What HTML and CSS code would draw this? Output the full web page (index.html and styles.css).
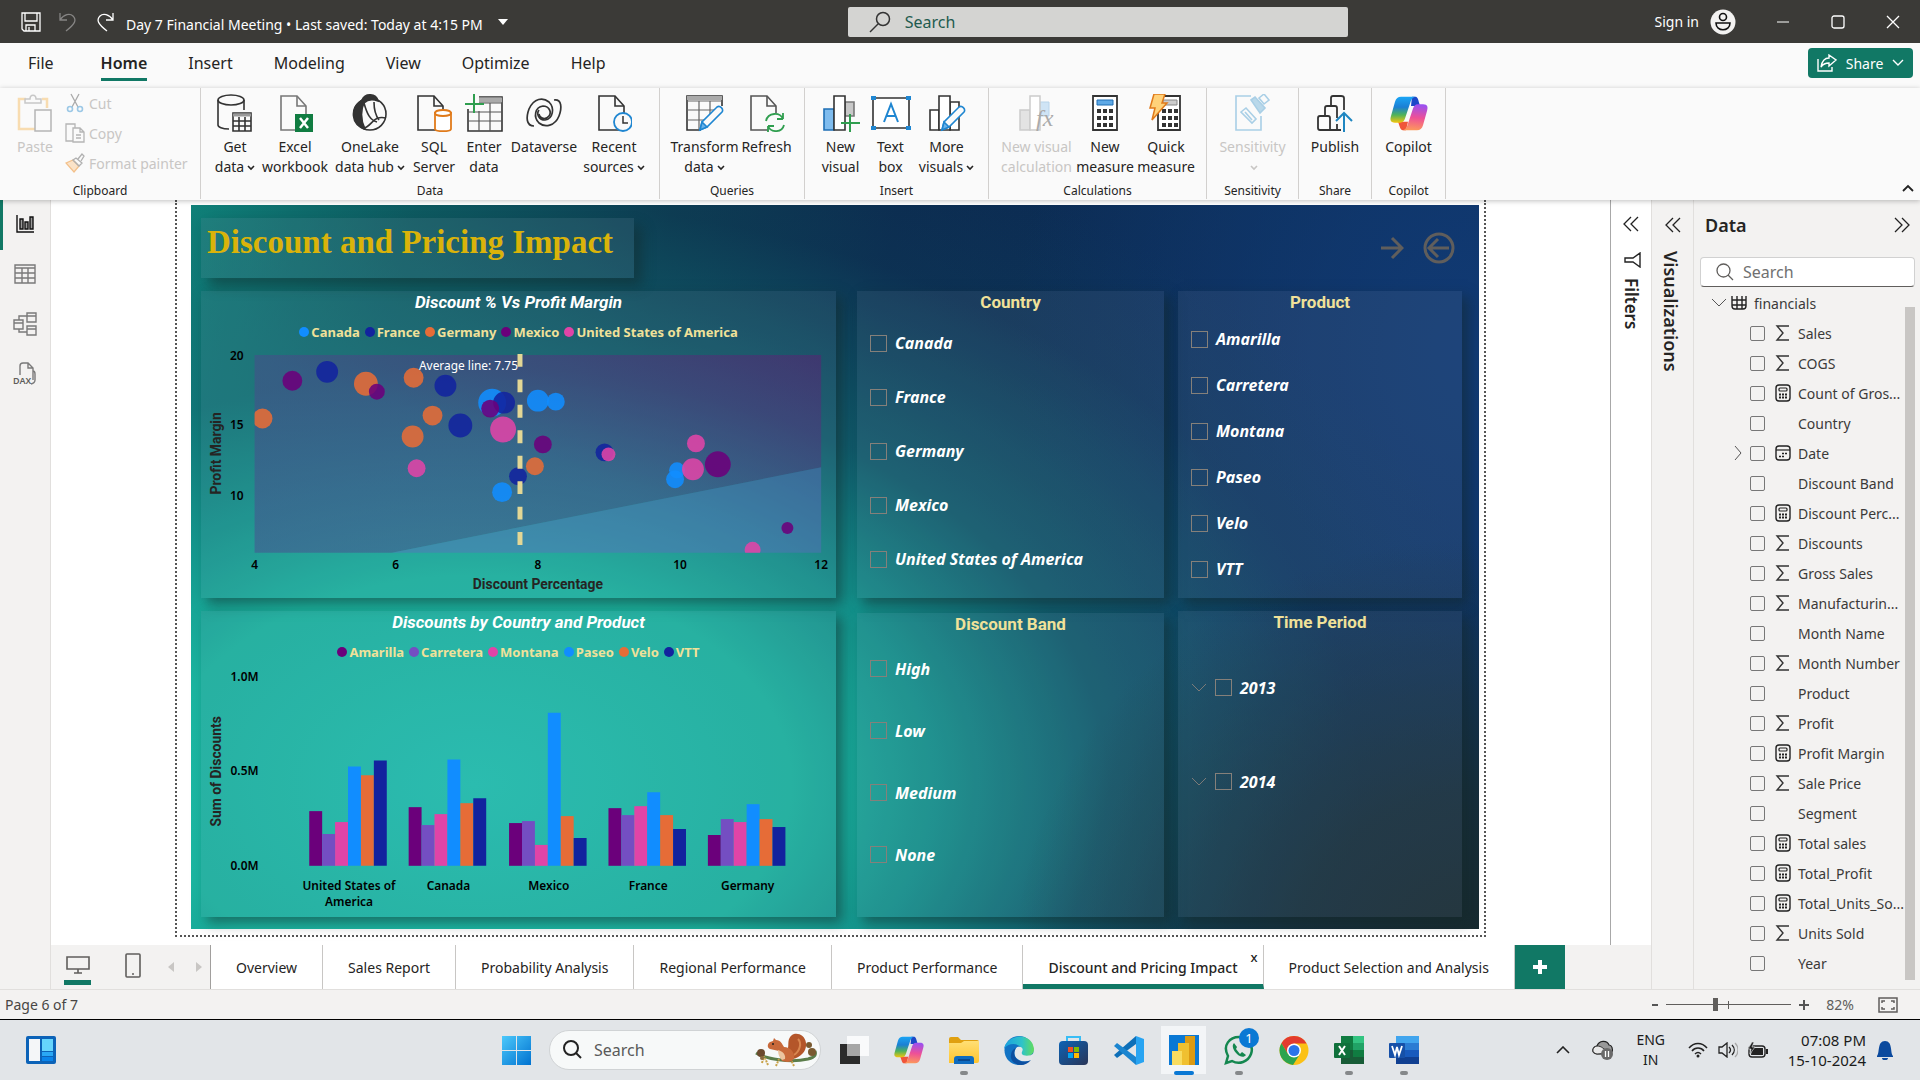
FILE: index.html
```html
<!DOCTYPE html>
<html lang="en">
<head>
<meta charset="utf-8">
<title>Day 7 Financial Meeting</title>
<link rel="stylesheet" href="styles.css">
</head>
<body>
<svg class="defs" aria-hidden="true">
  <defs>
    <linearGradient id="cpA" x1="0" y1="0" x2="0" y2="1"><stop offset="0" stop-color="#1aa5f5"/><stop offset=".4" stop-color="#1b7fd4"/><stop offset=".7" stop-color="#4fb35a"/><stop offset="1" stop-color="#f3c60d"/></linearGradient>
    <linearGradient id="cpB" x1=".4" y1="0" x2=".3" y2="1"><stop offset="0" stop-color="#9b50f0"/><stop offset=".5" stop-color="#ee5097"/><stop offset="1" stop-color="#fd9a5a"/></linearGradient>
    <linearGradient id="winG" x1="0" y1="0" x2="1" y2="1"><stop offset="0" stop-color="#4cc9fb"/><stop offset="1" stop-color="#0072d0"/></linearGradient>
    <linearGradient id="edgeG" x1="0" y1="0" x2="1" y2="0"><stop offset="0" stop-color="#1aa0e0"/><stop offset=".6" stop-color="#2fc3c9"/><stop offset="1" stop-color="#62dd5c"/></linearGradient>
    <linearGradient id="folderG" x1="0" y1="0" x2="0" y2="1"><stop offset="0" stop-color="#ffdf75"/><stop offset="1" stop-color="#ffc42e"/></linearGradient>
    <linearGradient id="storeG" x1="0" y1="0" x2="1" y2="1"><stop offset="0" stop-color="#0c63b5"/><stop offset="1" stop-color="#2a3557"/></linearGradient>
    <linearGradient id="shadeG" x1="0" y1="1" x2="1" y2="0"><stop offset="0" stop-color="#4a4c90"/><stop offset=".5" stop-color="#4a4a8c"/><stop offset="1" stop-color="#5c1f74"/></linearGradient>
    <symbol id="copilot" viewBox="0 0 38 42">
      <path d="M22 1h3c3 0 3 3 5 11h-9z" fill="#1c48c8"/>
      <path d="M16 41h-3c-3 0-3-4-5-10h10z" fill="#f0553a"/>
      <path d="M11 1h14c-3 1-4 4-5 8l-5 18c-1 3-2 5-5 5H5c-5 0-5-4-4-8L5 7c1-4 3-6 6-6z" fill="url(#cpA)"/>
      <path d="M27 41H13c3-1 4-4 5-8l5-18c1-3 2-5 5-5h5c5 0 5 4 4 8l-4 17c-1 4-3 6-6 6z" fill="url(#cpB)"/>
    </symbol>
    <symbol id="sigma" viewBox="0 0 16 16"><path d="M14 1H2l6 7-6 7h12" fill="none" stroke="#333" stroke-width="1.4"/></symbol>
    <symbol id="calc" viewBox="0 0 16 18"><rect x="1" y="1" width="14" height="16" rx="3" fill="none" stroke="#222" stroke-width="1.4"/><rect x="4" y="4" width="8" height="3" rx="1" fill="none" stroke="#222" stroke-width="1.2"/><path d="M4 10.500h2m1 0h2m1 0h2M4 13.500h2m1 0h2m1 0h2" stroke="#222" stroke-width="2"/></symbol>
    <symbol id="cal" viewBox="0 0 16 16"><rect x="1" y="1" width="14" height="14" rx="3" fill="none" stroke="#222" stroke-width="1.400"/><path d="M1 5h14" stroke="#222" stroke-width="1.200"/><path d="M7 8.500h2m1 0h2M4 11.500h2m1 0h2" stroke="#222" stroke-width="1.500"/></symbol>
    <symbol id="chev" viewBox="0 0 8 6"><path d="M1 1l3 3 3-3" fill="none" stroke="currentColor" stroke-width="1.600"/></symbol>
    <symbol id="dbl" viewBox="0 0 16 16"><path d="M8 1L1 8l7 7M15 1L8 8l7 7" fill="none" stroke="#222" stroke-width="1.300"/></symbol>
    <symbol id="doc" viewBox="0 0 27 36"><path d="M1 1h16l9 10v24H1z" fill="none" stroke="currentColor" stroke-width="1.600"/><path d="M17 1v10h9" fill="none" stroke="currentColor" stroke-width="1.600"/></symbol>
    <symbol id="pencil" viewBox="0 0 26 27"><path d="M2 25l2-8L19 2c3-2 7 2 5 5L9 22z" fill="#fafafa" stroke="#1f86d1" stroke-width="1.600"/><path d="M2 25l2-8 5 5z" fill="#6ab3ea" stroke="#1f86d1"/></symbol>
  </defs>
</svg>

<header class="titlebar">
  <button class="tb-btn" aria-label="Save"><svg width="20" height="20" viewBox="0 0 20 20" fill="none" stroke="#fff" stroke-width="1.300"><path d="M1 1h18v18H3l-2-2zM4 1v8h12V1M5 19v-6h9v6M8 15v4"/></svg></button>
  <button class="tb-btn" aria-label="Undo"><svg width="20" height="20" viewBox="0 0 20 20" fill="none" stroke="#868584" stroke-width="1.300"><path d="M2 1v7h7M2 8C6 2 12 1 15 4c4 4 2 8-7 15"/></svg></button>
  <button class="tb-btn" aria-label="Redo"><svg width="20" height="20" viewBox="0 0 20 20" fill="none" stroke="#fff" stroke-width="1.300"><path d="M18 1v7h-7M18 8C14 2 8 1 5 4c-4 4-2 8 7 15"/></svg></button>
  <span class="doc-name">Day 7 Financial Meeting • Last saved: Today at 4:15 PM</span>
  <svg class="caret" width="10" height="6" viewBox="0 0 10 6"><path d="M0 0h10L5 6z" fill="#fff"/></svg>
  <label class="top-search"><svg width="22" height="22" viewBox="0 0 22 22" fill="none" stroke="#333" stroke-width="1.500"><circle cx="14" cy="8" r="6.500"/><path d="M9 13l-8 8"/></svg><input type="text" placeholder="Search" aria-label="Search"></label>
  <div class="account"><span>Sign in</span><svg width="26" height="26" viewBox="0 0 26 26"><circle cx="13" cy="13" r="12.500" fill="#f3f2f1"/><g fill="none" stroke="#111" stroke-width="1.600"><circle cx="13" cy="8" r="3.500"/><path d="M6 14h14c0 9-14 9-14 0z"/></g></svg></div>
  <div class="win-btns">
    <button aria-label="Minimize"><svg width="14" height="14"><path d="M1 7h12" stroke="#fff"/></svg></button>
    <button aria-label="Maximize"><svg width="14" height="14"><rect x="1" y="1" width="12" height="12" rx="2" fill="none" stroke="#fff" stroke-width="1.300"/></svg></button>
    <button aria-label="Close"><svg width="14" height="14"><path d="M1 1l12 12M13 1L1 13" stroke="#fff" stroke-width="1.300"/></svg></button>
  </div>
</header>

<nav class="menu">
  <a href="#" class="file">File</a><a href="#" class="on">Home</a><a href="#">Insert</a><a href="#">Modeling</a><a href="#">View</a><a href="#">Optimize</a><a href="#">Help</a>
  <button class="share"><svg width="20" height="18" viewBox="0 0 20 18" fill="none" stroke="#fff" stroke-width="1.400"><path d="M1 5v12h14v-4"/><path d="M12 1l7 5-7 6V9C8 9 6 10 4 13c1-6 4-9 8-9z"/></svg>Share<svg width="12" height="8" viewBox="0 0 12 8"><path d="M1 1l5 5 5-5" fill="none" stroke="#fff" stroke-width="1.400"/></svg></button>
</nav>

<section class="ribbon">
  <div class="group g-clip"><div class="tools">
    <button class="tool off"><svg width="36" height="38" viewBox="0 0 36 38" fill="none"><path d="M9 5H2v30h16M25 5h5v9" stroke="#f8dcb0" stroke-width="2.500"/><path d="M8 9V5h5c0-5 6-5 6 0h5v4z" stroke="#c8c8c8" stroke-width="1.500"/><path d="M18 16h16v21H18z" stroke="#b5b5b5" stroke-width="1.500"/></svg><span>Paste</span></button>
    <div class="mini">
      <button><svg width="20" height="20" viewBox="0 0 20 20" fill="none" stroke="#aaa" stroke-width="1.300"><path d="M6 1l7 13M14 1L7 14"/><g stroke="#9cc8e6" stroke-width="1.600"><circle cx="5" cy="16" r="2.500"/><circle cx="15" cy="16" r="2.500"/></g></svg>Cut</button>
      <button><svg width="20" height="20" viewBox="0 0 20 20" fill="none" stroke="#b5b5b5" stroke-width="1.300"><path d="M8 18H1V1h9v4"/><path d="M8 5h7l4 4v10H8zM15 5v4h4M11 12h5M11 15h5"/></svg>Copy</button>
      <button><svg width="20" height="20" viewBox="0 0 20 20" fill="none" stroke-width="1.300"><path d="M1 10l7-3 6 6-5 6z" fill="#fbe3c8" stroke="#f3c08a"/><path d="M8 7l3-2 6 5-3 3zM13 6l4-5 2 2-3 5" stroke="#b0b0b0"/></svg>Format painter</button>
    </div></div><h2>Clipboard</h2></div>

  <div class="group g-data"><div class="tools">
    <button class="tool"><svg width="36" height="38" viewBox="0 0 36 38" fill="none" stroke="#333" stroke-width="1.600"><ellipse cx="14" cy="6" rx="13" ry="5"/><path d="M1 6v25c0 2 4 4 11 4M27 6v10"/><path d="M16 19h18v18H16zM16 27h18M16 32h18M22 23v14M28 23v14"/><path d="M16 21h18" stroke="#999" stroke-width="3"/></svg><span>Get<br>data<svg class="ch"><use href="#chev"/></svg></span></button>
    <button class="tool"><svg width="36" height="38" viewBox="0 0 36 38"><use href="#doc" x="3" y="1" width="27" height="36" color="#777"/><path d="M18 20h18v18H18z" fill="#107c41"/><path d="M23 24l8 10M31 24l-8 10" stroke="#fff" stroke-width="2.500"/></svg><span>Excel<br>workbook</span></button>
    <button class="tool"><svg width="36" height="38" viewBox="0 0 36 38" fill="none" stroke="#333" stroke-width="1.600"><circle cx="18" cy="20" r="16"/><path d="M10 6c3-7 14-7 16 1-5-2-10-2-14 2-3 6-4 16 1 26C-2 30-1 14 8 8z" fill="#333"/><path d="M12 9c3 11 6 17 13 19M22 8c0 8 2 14 5 18M12 34c8-2 9-13 22-10"/></svg><span>OneLake<br>data hub<svg class="ch"><use href="#chev"/></svg></span></button>
    <button class="tool"><svg width="36" height="38" viewBox="0 0 36 38"><use href="#doc" x="1" y="1" width="27" height="36" color="#333"/><path d="M19 19v16c0 3 16 3 16 0V19z" fill="#fff" stroke="#e07a1a" stroke-width="1.800"/><ellipse cx="27" cy="19" rx="8" ry="3" fill="#fff" stroke="#e07a1a" stroke-width="1.800"/></svg><span>SQL<br>Server</span></button>
    <button class="tool"><svg width="38" height="38" viewBox="0 0 38 38" fill="none" stroke="#333" stroke-width="1.600"><path d="M14 3h23v34H3V15"/><path d="M14 6h23" stroke="#aaa" stroke-width="5"/><path d="M14 9h23M3 18h34M3 27h34M14 17v20M25 9v28" stroke="#555" stroke-width="1.200"/><path d="M9 0v19M0 10h19" stroke="#2f9e4f" stroke-width="2"/></svg><span>Enter<br>data</span></button>
    <button class="tool"><svg width="38" height="38" viewBox="0 0 38 38" fill="none" stroke="#333" stroke-width="1.700"><path d="M29 6c8-1 8 8 5 16-4 10-14 12-20 7-6-6-4-16 4-17 6 0 9 6 6 10-3 4-9 3-10-2"/><path d="M9 32c-8 0-8-9-5-17C9 4 18 3 24 8c6 6 4 17-4 18-6 0-9-6-6-10"/></svg><span>Dataverse</span></button>
    <button class="tool"><svg width="36" height="38" viewBox="0 0 36 38"><use href="#doc" x="2" y="1" width="27" height="36" color="#333"/><circle cx="27" cy="28" r="9" fill="#fafafa" stroke="#1f86d1" stroke-width="1.800"/><path d="M27 22v7h5" fill="none" stroke="#333" stroke-width="1.500"/></svg><span>Recent<br>sources<svg class="ch"><use href="#chev"/></svg></span></button>
  </div><h2>Data</h2></div>

  <div class="group g-quer"><div class="tools">
    <button class="tool"><svg width="38" height="38" viewBox="0 0 38 38" fill="none" stroke="#333" stroke-width="1.600"><path d="M15 36H1V2h35v10"/><path d="M1 4h35" stroke="#aaa" stroke-width="4"/><path d="M1 7h35M1 16h32M1 26h18M13 7v29M24 7v14" stroke="#666" stroke-width="1.200"/><use href="#pencil" x="12" y="11" width="26" height="27"/></svg><span>Transform<br>data<svg class="ch"><use href="#chev"/></svg></span></button>
    <button class="tool"><svg width="36" height="38" viewBox="0 0 36 38" fill="none"><use href="#doc" x="1" y="1" width="27" height="36" color="#555"/><circle cx="26" cy="29" r="10" fill="#fafafa"/><path d="M17 27c2-9 14-9 17-2V19M34 25h-6M35 31c-2 8-13 8-16 1v6M19 32h6" stroke="#2f9e4f" stroke-width="1.800"/></svg><span>Refresh</span></button>
  </div><h2>Queries</h2></div>

  <div class="group g-ins"><div class="tools">
    <button class="tool"><svg width="38" height="38" viewBox="0 0 38 38" stroke="#333" stroke-width="1.600"><path d="M23 8h9v14h-9z" fill="#c8c8c8" stroke="#777"/><path d="M2 15h10v21H2z" fill="#7fbcee" stroke="#1f6fb5"/><path d="M12 2h11v34H12z" fill="#fff"/><path d="M28 20v19M19 29h19" stroke="#2f9e4f" stroke-width="2"/></svg><span>New<br>visual</span></button>
    <button class="tool"><svg width="40" height="38" viewBox="0 0 40 38"><path d="M2 4h36v30H2z" fill="#fff" stroke="#333" stroke-width="1.600"/><path d="M0 2h5v4H0zM35 2h5v4h-5zM0 32h5v4H0zM35 32h5v4h-5z" fill="#1f86d1"/><path d="M13 28l7-18 7 18M15 22h10" fill="none" stroke="#1f86d1" stroke-width="2"/></svg><span>Text<br>box</span></button>
    <button class="tool"><svg width="38" height="38" viewBox="0 0 38 38" fill="#fff" stroke="#333" stroke-width="1.600"><path d="M22 8h9v28h-9z"/><path d="M2 16h9v20H2z"/><path d="M11 2h11v34H11z"/><use href="#pencil" x="12" y="11" width="26" height="27"/></svg><span>More<br>visuals<svg class="ch"><use href="#chev"/></svg></span></button>
  </div><h2>Insert</h2></div>

  <div class="group g-calc"><div class="tools">
    <button class="tool off"><svg width="38" height="38" viewBox="0 0 38 38"><path d="M22 8h9v14h-9z" fill="#cfe4f5" stroke="#b8d4ea"/><path d="M2 16h10v20H2z" fill="#e3e3e3" stroke="#ccc" stroke-width="1.500"/><path d="M12 2h10v34H12z" fill="#fff" stroke="#ccc" stroke-width="1.500"/><text x="18" y="32" class="fx">fx</text></svg><span>New visual<br>calculation</span></button>
    <button class="tool"><svg width="26" height="38" viewBox="0 0 26 38"><path d="M1 2h24v34H1z" fill="#fff" stroke="#333" stroke-width="1.800"/><path d="M5 6h16v5H5z" fill="#5ea9e6" stroke="#1f6fb5"/><path d="M5 17h16M5 24h16M5 31h16" stroke="#333" stroke-width="4" stroke-dasharray="4 2"/></svg><span>New<br>measure</span></button>
    <button class="tool"><svg width="34" height="38" viewBox="0 0 34 38"><path d="M9 2h22v34H9z" fill="#fff" stroke="#333" stroke-width="1.800"/><path d="M14 6h14v5H14z" fill="#ccc" stroke="#888"/><path d="M13 17h16M13 24h16M13 31h16" stroke="#333" stroke-width="4" stroke-dasharray="4 2"/><path d="M5 0h11l-3 9h5L3 26l3-12H1z" fill="#ffd27a" stroke="#e07a1a" stroke-width="1.500"/></svg><span>Quick<br>measure</span></button>
  </div><h2>Calculations</h2></div>

  <div class="group g-sens"><div class="tools">
    <button class="tool off"><svg width="36" height="38" viewBox="0 0 36 38" fill="none" stroke="#a9cfe6" stroke-width="1.600"><path d="M17 2H2v34h25V22"/><path d="M25 4l5-4 5 6-5 4zM7 18l5-4 10 11-4 4z"/><path d="M11 18l7 8"/><path d="M17 6l4-3 10 11-5 5z" fill="#b9d8ea"/></svg><span>Sensitivity<br><svg class="ch"><use href="#chev"/></svg></span></button>
  </div><h2>Sensitivity</h2></div>
  <div class="group g-share"><div class="tools">
    <button class="tool"><svg width="36" height="38" viewBox="0 0 36 38" fill="none" stroke="#333" stroke-width="1.800"><path d="M1 24q0-2 2-2h8q2 0 2 2v12H3q-2 0-2-2zM8 22v-8q0-2 2-2h8q2 0 2 2v10M14 12V4q0-2 2-2h8q3 0 3 2v12M13 36h11M20 30v6"/><path d="M27 38V19M19 27l8-8 8 8" stroke="#1f86c1" stroke-width="2"/></svg><span>Publish</span></button>
  </div><h2>Share</h2></div>
  <div class="group g-cop"><div class="tools">
    <button class="tool"><svg width="40" height="38"><svg y="2" x="1" width="38" height="35" viewBox="0 0 38 42" preserveAspectRatio="none"><use href="#copilot" width="38" height="42"/></svg></svg><span>Copilot</span></button>
  </div><h2>Copilot</h2></div>
  <button class="collapse" aria-label="Collapse ribbon"><svg width="12" height="8"><path d="M1 7l5-5 5 5" fill="none" stroke="#222" stroke-width="1.800"/></svg></button>
</section>

<main class="work">
  <nav class="rail">
    <button class="on" aria-label="Report view"><svg width="20" height="20" viewBox="0 0 20 20" fill="none" stroke="#111" stroke-width="1.400"><path d="M2 1v17h17"/><path d="M5 5h3v10H5zM10 8h3v7h-3zM15 3h3v12h-3z" fill="#999"/></svg></button>
    <button aria-label="Table view"><svg width="22" height="20" viewBox="0 0 22 20" fill="none" stroke="#7a7a7a" stroke-width="1.400"><path d="M1 1h20v18H1zM1 4h20M1 9h20M1 14h20M8 4v15M14 4v15"/></svg></button>
    <button aria-label="Model view"><svg width="24" height="24" viewBox="0 0 24 24" fill="none" stroke="#7a7a7a" stroke-width="1.400"><path d="M1 8h9v9H1zM1 11h9M14 1h9v9h-9zM14 4h9M14 14h9v9h-9zM14 17h9M6 8V4h8M6 17v3h8"/></svg></button>
    <button aria-label="DAX query view"><svg width="24" height="24" viewBox="0 0 24 24" fill="none" stroke="#7a7a7a" stroke-width="1.400"><path d="M7 13V4q0-3 3-3h5l5 5v12M15 1v5h5M20 9q2 0 2 3v6q0 3-4 4"/><text x="0" y="22" class="dax">DAX</text></svg></button>
  </nav>

  <div class="center">
    <div class="stage">
      <div class="canvas"><div class="frame"><div class="report">
        <div class="head">
          <h1>Discount and Pricing Impact</h1>
          <div class="arrows">
            <button aria-label="Next"><svg width="24" height="24" viewBox="0 0 24 24" fill="none" stroke="#605e5c" stroke-width="3"><path d="M1 12h20M12 2l10 10-10 10"/></svg></button>
            <button aria-label="Back"><svg width="32" height="32" viewBox="0 0 32 32" fill="none" stroke="#605e5c" stroke-width="3"><circle cx="16" cy="16" r="14"/><path d="M26 16H7M15 7l-9 9 9 9"/></svg></button>
          </div>
        </div>
        <section class="card">
          <h3 class="it">Discount % Vs Profit Margin</h3>
          <ul class="legend"><li><i class="blue"></i>Canada</li><li><i class="navy"></i>France</li><li><i class="orange"></i>Germany</li><li><i class="plum"></i>Mexico</li><li><i class="pink"></i>United States of America</li></ul>
          <svg class="chart" viewBox="0 0 635 254">
            <clipPath id="plot"><rect x="52" y="10" width="570" height="199"/></clipPath>
            <path d="M52 10h570v113L190 209H52z" fill="url(#shadeG)" fill-opacity=".52"/>
            <path d="M622 123v86H190z" fill="#6269c3" fill-opacity=".42"/>
            <g clip-path="url(#plot)" fill-opacity=".88">
              <circle class="plum" cx="90" cy="36" r="10"/><circle class="navy" cx="125" cy="27" r="11"/><circle class="orange" cx="164" cy="39" r="12"/><circle class="plum" cx="175" cy="47" r="8"/><circle class="orange" cx="212" cy="33" r="10"/><circle class="navy" cx="244" cy="41" r="11"/><circle class="orange" cx="60" cy="74" r="10"/><circle class="orange" cx="231" cy="71" r="10"/><circle class="orange" cx="211" cy="92" r="11"/><circle class="navy" cx="259" cy="81" r="12"/><circle class="blue" cx="291" cy="58" r="14"/><circle class="navy" cx="303" cy="58" r="11"/><circle class="plum" cx="289" cy="64" r="9"/><circle class="pink" cx="302" cy="85" r="13"/><circle class="blue" cx="337" cy="56" r="11"/><circle class="blue" cx="355" cy="57" r="9"/><circle class="plum" cx="342" cy="100" r="9"/><circle class="orange" cx="334" cy="122" r="9"/><circle class="navy" cx="317" cy="132" r="9"/><circle class="blue" cx="301" cy="148" r="10"/><circle class="pink" cx="215" cy="124" r="9"/><circle class="navy" cx="404" cy="108" r="9"/><circle class="pink" cx="408" cy="110" r="7"/><circle class="pink" cx="496" cy="99" r="9"/><circle class="blue" cx="477" cy="126" r="8"/><circle class="blue" cx="475" cy="135" r="9"/><circle class="pink" cx="493" cy="125" r="11"/><circle class="plum" cx="518" cy="120" r="13"/><circle class="plum" cx="588" cy="184" r="6"/><circle class="pink" cx="553" cy="206" r="8"/>
            </g>
            <path d="M319 9v194" stroke="#e3d795" stroke-width="5" stroke-dasharray="13 12.600"/>
            <text class="avg" x="317" y="25">Average line: 7.75</text>
            <g class="ytick"><text x="41" y="15">20</text><text x="41" y="85">15</text><text x="41" y="156">10</text></g>
            <g class="xtick"><text x="52" y="225">4</text><text x="194" y="225">6</text><text x="337" y="225">8</text><text x="480" y="225">10</text><text x="622" y="225">12</text></g>
            <text class="axis" x="337" y="245">Discount Percentage</text>
            <text class="axis" transform="rotate(-90 18 109)" x="18" y="109">Profit Margin</text>
          </svg>
        </section>
        <fieldset class="card slicer country"><legend>Country</legend>
          <label><input type="checkbox">Canada</label><label><input type="checkbox">France</label><label><input type="checkbox">Germany</label><label><input type="checkbox">Mexico</label><label><input type="checkbox">United States of America</label>
        </fieldset>
        <fieldset class="card slicer product"><legend>Product</legend>
          <label><input type="checkbox">Amarilla</label><label><input type="checkbox">Carretera</label><label><input type="checkbox">Montana</label><label><input type="checkbox">Paseo</label><label><input type="checkbox">Velo</label><label><input type="checkbox">VTT</label>
        </fieldset>
        <section class="card">
          <h3 class="it">Discounts by Country and Product</h3>
          <ul class="legend"><li><i class="plum"></i>Amarilla</li><li><i class="violet"></i>Carretera</li><li><i class="pink"></i>Montana</li><li><i class="blue"></i>Paseo</li><li><i class="orange"></i>Velo</li><li><i class="navy"></i>VTT</li></ul>
          <svg class="chart" viewBox="0 0 635 254">
            <g class="ytick"><text x="56" y="16">1.0M</text><text x="56" y="111">0.5M</text><text x="56" y="206">0.0M</text></g>
            <g><path class="plum" d="M107 202v-55h13v55z"/><path class="violet" d="M120 202v-32h13v32z"/><path class="pink" d="M133 202v-44h13v44z"/><path class="blue" d="M146 202v-100h13v100z"/><path class="orange" d="M159 202v-91h13v91z"/><path class="navy" d="M172 202v-106h13v106z"/></g>
            <g><path class="plum" d="M207 202v-59h13v59z"/><path class="violet" d="M220 202v-41h13v41z"/><path class="pink" d="M233 202v-52h13v52z"/><path class="blue" d="M246 202v-107h13v107z"/><path class="orange" d="M259 202v-63h13v63z"/><path class="navy" d="M272 202v-68h13v68z"/></g>
            <g><path class="plum" d="M308 202v-43h13v43z"/><path class="violet" d="M321 202v-45h13v45z"/><path class="pink" d="M334 202v-21h13v21z"/><path class="blue" d="M347 202v-154h13v154z"/><path class="orange" d="M360 202v-50h13v50z"/><path class="navy" d="M373 202v-28h13v28z"/></g>
            <g><path class="plum" d="M408 202v-58h13v58z"/><path class="violet" d="M421 202v-51h13v51z"/><path class="pink" d="M434 202v-60h13v60z"/><path class="blue" d="M447 202v-74h13v74z"/><path class="orange" d="M460 202v-51h13v51z"/><path class="navy" d="M473 202v-37h13v37z"/></g>
            <g><path class="plum" d="M508 202v-31h13v31z"/><path class="violet" d="M521 202v-47h13v47z"/><path class="pink" d="M534 202v-44h13v44z"/><path class="blue" d="M547 202v-62h13v62z"/><path class="orange" d="M560 202v-47h13v47z"/><path class="navy" d="M573 202v-39h13v39z"/></g>
            <g class="xtick"><text x="147" y="226">United States of</text><text x="147" y="242">America</text><text x="247" y="226">Canada</text><text x="348" y="226">Mexico</text><text x="448" y="226">France</text><text x="548" y="226">Germany</text></g>
            <text class="axis" transform="rotate(-90 18 107)" x="18" y="107">Sum of Discounts</text>
          </svg>
        </section>
        <fieldset class="card slicer band"><legend>Discount Band</legend>
          <label><input type="checkbox">High</label><label><input type="checkbox">Low</label><label><input type="checkbox">Medium</label><label><input type="checkbox">None</label>
        </fieldset>
        <fieldset class="card slicer time"><legend>Time Period</legend>
          <label><svg width="16" height="9" viewBox="0 0 16 9"><path d="M1 1l7 7 7-7" fill="none" stroke="#7c7a78"/></svg><input type="checkbox">2013</label><label><svg width="16" height="9" viewBox="0 0 16 9"><path d="M1 1l7 7 7-7" fill="none" stroke="#7c7a78"/></svg><input type="checkbox">2014</label>
        </fieldset>
      </div></div></div>
      <aside class="filters"><svg class="dbl" width="20" height="16"><use href="#dbl"/></svg><svg width="20" height="16" viewBox="0 0 20 16"><path d="M19 1v14l-7-5H4V6h8z" fill="none" stroke="#222" stroke-width="1.400"/></svg><h2>Filters</h2></aside>
    </div>
    <div class="pages">
      <div class="modes">
        <button class="on" aria-label="Desktop layout"><svg width="24" height="18" viewBox="0 0 24 18" fill="none" stroke="#605e5c" stroke-width="1.600"><path d="M1 1h22v12H1zM12 13v4M8 17h8"/></svg></button>
        <button aria-label="Mobile layout"><svg width="16" height="26" viewBox="0 0 16 26" fill="none" stroke="#605e5c" stroke-width="1.600"><rect x="1" y="1" width="14" height="23" rx="1"/><path d="M7 21h2"/></svg></button>
        <svg width="6" height="10"><path d="M6 0v10L0 5z" fill="#c8c6c4"/></svg><svg width="6" height="10"><path d="M0 0v10l6-5z" fill="#c8c6c4"/></svg>
      </div>
      <a href="#">Overview</a><a href="#">Sales Report</a><a href="#">Probability Analysis</a><a href="#">Regional Performance</a><a href="#">Product Performance</a><a href="#" class="on">Discount and Pricing Impact<b>x</b></a><a href="#">Product Selection and Analysis</a>
      <button class="add" aria-label="New page"><svg width="14" height="14"><path d="M7 0v14M0 7h14" stroke="#fff" stroke-width="4"/></svg></button>
    </div>
  </div>

  <aside class="viz"><svg class="dbl" width="20" height="16"><use href="#dbl"/></svg><h2>Visualizations</h2></aside>

  <aside class="data">
    <div class="data-head"><h2>Data</h2><svg class="flip" width="16" height="16"><use href="#dbl"/></svg></div>
    <label class="data-search"><svg width="18" height="18" viewBox="0 0 18 18" fill="none" stroke="#605e5c" stroke-width="1.300"><circle cx="7.500" cy="7.500" r="6.500"/><path d="M12 12l5 5"/></svg><input type="text" placeholder="Search" aria-label="Search fields"></label>
    <div class="tree">
      <div class="table-row"><svg width="14" height="8"><path d="M0 0l7 7 7-7" fill="none" stroke="#555"/></svg><svg width="16" height="14" viewBox="0 0 16 14" fill="none" stroke="#222" stroke-width="1.400"><path d="M1 0v10q0 3 3 3h8q3 0 3-3V0M6 0v13M11 0v13M1 4h14M1 9h14"/></svg>financials</div>
      <label><input type="checkbox"><svg><use href="#sigma"/></svg>Sales</label>
      <label><input type="checkbox"><svg><use href="#sigma"/></svg>COGS</label>
      <label><input type="checkbox"><svg><use href="#calc"/></svg>Count of Gros...</label>
      <label><input type="checkbox"><svg></svg>Country</label>
      <label class="exp"><svg class="arrow" viewBox="0 0 8 14"><path d="M1 0l6 7-6 7" fill="none" stroke="#555"/></svg><input type="checkbox"><svg><use href="#cal"/></svg>Date</label>
      <label><input type="checkbox"><svg></svg>Discount Band</label>
      <label><input type="checkbox"><svg><use href="#calc"/></svg>Discount Perc...</label>
      <label><input type="checkbox"><svg><use href="#sigma"/></svg>Discounts</label>
      <label><input type="checkbox"><svg><use href="#sigma"/></svg>Gross Sales</label>
      <label><input type="checkbox"><svg><use href="#sigma"/></svg>Manufacturin...</label>
      <label><input type="checkbox"><svg></svg>Month Name</label>
      <label><input type="checkbox"><svg><use href="#sigma"/></svg>Month Number</label>
      <label><input type="checkbox"><svg></svg>Product</label>
      <label><input type="checkbox"><svg><use href="#sigma"/></svg>Profit</label>
      <label><input type="checkbox"><svg><use href="#calc"/></svg>Profit Margin</label>
      <label><input type="checkbox"><svg><use href="#sigma"/></svg>Sale Price</label>
      <label><input type="checkbox"><svg></svg>Segment</label>
      <label><input type="checkbox"><svg><use href="#calc"/></svg>Total sales</label>
      <label><input type="checkbox"><svg><use href="#calc"/></svg>Total_Profit</label>
      <label><input type="checkbox"><svg><use href="#calc"/></svg>Total_Units_So...</label>
      <label><input type="checkbox"><svg><use href="#sigma"/></svg>Units Sold</label>
      <label><input type="checkbox"><svg></svg>Year</label>
      <div class="scrollbar"></div>
    </div>
  </aside>
</main>

<footer class="status"><span>Page 6 of 7</span>
  <div class="zoom"><button aria-label="Zoom out"><svg width="8" height="14"><path d="M1 7h6" stroke="#555" stroke-width="2"/></svg></button><input type="range" min="10" max="220" value="92" aria-label="Zoom"><button aria-label="Zoom in"><svg width="12" height="14"><path d="M6 2v10M1 7h10" stroke="#555" stroke-width="2"/></svg></button><span class="pct">82%</span><svg width="20" height="16" viewBox="0 0 20 16" fill="none" stroke="#605e5c" stroke-width="1.500"><path d="M1 1h18v14H1z"/><path d="M4 6V4h3M13 4h3v2M16 10v2h-3M7 12H4v-2"/></svg></div>
</footer>

<footer class="taskbar">
  <button class="widgets" aria-label="Widgets"><svg width="30" height="28" viewBox="0 0 30 28"><rect width="30" height="28" rx="2" fill="#0c63b8"/><path d="M3 3h11v22H3z" fill="#f4f6f8"/><path d="M16 3h11v12H16z" fill="#66d5fc"/><path d="M16 16h11v4H16z" fill="#2aa8f5"/><path d="M16 21h11v4H16z" fill="#0a84ea"/></svg></button>
  <div class="dock">
    <button aria-label="Start"><svg width="29" height="29" viewBox="0 0 29 29"><path d="M0 0h14v14H0zM15 0h14v14H15zM0 15h14v14H0zM15 15h14v14H15z" fill="url(#winG)"/></svg></button>
    <label class="task-search"><svg width="20" height="20" viewBox="0 0 20 20" fill="none" stroke="#222" stroke-width="2"><circle cx="9" cy="8" r="7"/><path d="M14 13l5 5"/></svg><input type="text" placeholder="Search" aria-label="Search Windows">
      <svg width="64" height="34" viewBox="0 0 64 34"><path d="M2 20c10 6 34 10 52 6 8-2 8-5 7-8" fill="none" stroke="#5b7d4a" stroke-width="3"/><path d="M8 30l2-7M22 33l3-7M40 33l-3-6M14 32l-3-7" stroke="#c8a24a" stroke-width="2" stroke-dasharray="2 1"/><circle cx="7" cy="20" r="4" fill="#6b4a2e"/><circle cx="8" cy="25" r="2" fill="#8a6a40"/><circle cx="55" cy="12" r="3" fill="#7a5a30"/><circle cx="58" cy="19" r="4" fill="#7a5a30"/><path d="M39 26c8-2 14-8 13-16C51 1 42-1 38 2c-5 4-3 9-4 13z" fill="#b4562a"/><path d="M40 22c6-4 8-12 4-16" fill="none" stroke="#d88650" stroke-width="2"/><path d="M28 28c-1-3-3-5-3-10l-9-2c-3-1-3-5 0-7l3-1 1-3 2 2c5 0 6 4 8 7 6 0 11 5 10 11-1 3-4 4-7 4z" fill="#c8693a"/><path d="M24 17c0 5 2 8 4 10l3-1c1-5-3-8-7-9z" fill="#ecc5a0"/><circle cx="19" cy="11" r="1" fill="#222"/></svg></label>
    <button aria-label="Task view"><svg width="30" height="28" viewBox="0 0 30 28"><path d="M1 8h20v20H1z" fill="#2b2b2b"/><path d="M8 0h22v20H8z" fill="#fff" fill-opacity=".8"/><path d="M8 8h13v12H8z" fill="#a6a6a6"/></svg></button>
    <button aria-label="Copilot"><svg width="30" height="28" viewBox="0 0 38 42" preserveAspectRatio="none"><use href="#copilot"/></svg></button>
    <button class="run" aria-label="File Explorer"><svg width="30" height="27" viewBox="0 0 30 27"><path d="M0 2q0-2 2-2h7l3 3h16q2 0 2 2v6H0z" fill="#e0a010"/><path d="M0 6h12l3-2h15v20q0 2-2 2H0z" fill="url(#folderG)"/><path d="M5 27v-5q0-3 3-3h14q3 0 3 3v5z" fill="#0f6cc0"/><path d="M9 23h12" stroke="#0a4a90" stroke-width="2"/></svg></button>
    <button aria-label="Edge"><svg width="30" height="29" viewBox="0 0 30 29"><circle cx="15" cy="14.500" r="14.500" fill="#1273c4"/><path d="M0 13C2-2 28-5 30 13c0 7-8 9-12 6-2-2 1-3 0-6C16 7 4 6 0 13z" fill="url(#edgeG)"/><path d="M12 12c-5 8 3 17 16 12l2-7c-4 4-11 3-12 1-1-2 2-4 0-6-2-2-5-1-6 0z" fill="#e4e7ea"/><path d="M12 12c-6 9 4 17 15 12-8 10-22 3-20-5 0-3 2-6 5-7z" fill="#0c4fa0"/></svg></button>
    <button aria-label="Store"><svg width="29" height="29" viewBox="0 0 29 29"><path d="M8 6V1h13v5" fill="none" stroke="#39bdf5" stroke-width="2"/><rect y="5" width="29" height="24" rx="4" fill="url(#storeG)"/><path d="M9 11h5v5H9z" fill="#f25022"/><path d="M15 11h5v5h-5z" fill="#7fba00"/><path d="M9 17h5v5H9z" fill="#00a4ef"/><path d="M15 17h5v5h-5z" fill="#ffb900"/></svg></button>
    <button aria-label="Visual Studio Code"><svg width="30" height="29" viewBox="0 0 30 29"><path d="M22 0v8L3 22l-3-3z" fill="#0d6fb8"/><path d="M0 10l3-3 19 14v8z" fill="#1a85d0"/><path d="M22 0l8 3v23l-8 3z" fill="#28a4f2"/></svg></button>
    <button class="run current" aria-label="Power BI"><svg width="30" height="30" viewBox="0 0 30 30"><path d="M0 0h30v30H0z" fill="#0a78d4"/><path d="M16 1h10v29H16z" fill="#dc9a12"/><path d="M9 8h11v22H9z" fill="#f0c030"/><path d="M3 16h10v14H3z" fill="#f8dc60"/></svg></button>
    <button class="run wa" aria-label="WhatsApp"><svg width="30" height="30" viewBox="0 0 30 30" fill="none" stroke="#14874f" stroke-width="2.500"><path d="M2 28l2-7C-2 10 6 2 15 2s15 9 12 17c-3 8-12 11-19 7z"/><path d="M10 8c-3 3 0 8 3 11s7 4 9 1l-4-3-2 2-4-5 1-2z" fill="#14874f" stroke="none"/></svg><b>1</b></button>
    <button aria-label="Chrome"><svg width="30" height="29" viewBox="-15 -14.500 30 29"><circle r="14.500" fill="#fbc116"/><path d="M0-7H12.600A14.500 14.500 0 0 0-12.600-7.200L-6 3.500z" fill="#e33b2e"/><path d="M-12.600-7.200L-6 3.500 6 3.500-1 14.400A14.500 14.500 0 0 1-12.600-7.200z" fill="#2da44e"/><circle r="7" fill="#fff"/><circle r="5.500" fill="#2a74e8"/></svg></button>
    <button class="run" aria-label="Excel"><svg width="30" height="28" viewBox="0 0 30 28"><path d="M7 0h23v28H7z" fill="#21a366"/><path d="M7 0h12v14H7z" fill="#107c41"/><path d="M7 14h23v14H7z" fill="#185c37"/><path d="M19 0h11v7H19z" fill="#33c481"/><path d="M19 14h11v7H19z" fill="#107c41"/><rect y="7" width="16" height="15" rx="1" fill="#0f703b"/><path d="M5 10l6 9M11 10l-6 9" stroke="#fff" stroke-width="2"/></svg></button>
    <button class="run" aria-label="Word"><svg width="30" height="28" viewBox="0 0 30 28"><path d="M7 0h23v28H7z" fill="#2b7cd3"/><path d="M7 0h23v7H7z" fill="#41a5ee"/><path d="M7 14h23v7H7z" fill="#185abd"/><path d="M7 21h23v7H7z" fill="#103f91"/><rect y="7" width="16" height="15" rx="1" fill="#1650a8"/><path d="M3 10l3 9 2-8 2 8 3-9" fill="none" stroke="#fff" stroke-width="1.800"/></svg></button>
  </div>
  <div class="tray">
    <svg width="14" height="8"><path d="M1 7l6-6 6 6" fill="none" stroke="#222" stroke-width="1.600"/></svg>
    <svg width="22" height="20" viewBox="0 0 22 20"><path d="M5 14c-6-1-5-7 0-8C7 0 15 0 17 5c3 0 4 4 3 7l-2 2z" fill="#999" stroke="#222" stroke-width="1.200"/><path d="M5 14c-6-1-5-7 0-8 5 0 6 3 9 4l5 3z" fill="#e8e8e8" stroke="#333"/><circle cx="15" cy="14" r="6" fill="#6a6a6a"/><path d="M13.500 11v6M16.500 11v6" stroke="#fff" stroke-width="1.300"/></svg>
    <span class="lang">ENG<br>IN</span>
    <div class="net">
    <svg width="20" height="16" viewBox="0 0 20 16" fill="none" stroke="#222" stroke-width="1.500"><path d="M1 6c5-6 13-6 18 0M4 9c3-4 9-4 12 0M7 12c2-2 4-2 6 0"/><circle cx="10" cy="14" r="1.500" fill="#222" stroke="none"/></svg>
    <svg width="20" height="16" viewBox="0 0 20 16" fill="none" stroke="#222" stroke-width="1.300"><path d="M1 5h3l5-4v14l-5-4H1zM11 5c2 2 2 4 0 6M14 3c3 3 3 7 0 10"/><path d="M17 1c4 4 4 10 0 14" stroke="#aaa"/></svg>
    <svg width="20" height="16" viewBox="0 0 20 16"><rect x="1" y="4" width="16" height="11" rx="3" fill="none" stroke="#222" stroke-width="1.400"/><path d="M4 6h11v7H3zM18 7h2v5h-2z" fill="#222"/><path d="M4 0L0 7h3l-1 5 5-7H4l2-5z" fill="#222" stroke="#e2e5e8" stroke-width=".600"/></svg>
    </div>
    <time>07:08 PM<br>15-10-2024</time>
    <svg width="16" height="19" viewBox="0 0 16 19"><path d="M0 15c3-3 0-15 8-15s5 12 8 15v1H0zM5 17h6c0 3-6 3-6 0z" fill="#0b4a9e"/></svg>
  </div>
</footer>
</body>
</html>
```
FILE: styles.css
```css
* { box-sizing: border-box; }
body {
  margin: 0;
  min-height: 100vh;
  display: flex;
  flex-direction: column;
  font-family: "Noto Sans", "Open Sans", sans-serif;
  font-size: 14px;
  color: #252423;
  background: #fff;
}
button { font: inherit; color: inherit; background: none; border: 0; padding: 0; }
a { color: inherit; text-decoration: none; }
h1, h2, h3, ul { margin: 0; padding: 0; font-weight: 600; }
input { font: inherit; color: inherit; margin: 0; }
svg { flex: none; display: block; }
.defs { position: absolute; width: 0; height: 0; }

.plum { fill: #6b007b; background: #6b007b; }
.violet { fill: #744ec2; background: #744ec2; }
.pink { fill: #e044a7; background: #e044a7; }
.blue { fill: #118dff; background: #118dff; }
.orange { fill: #e66c37; background: #e66c37; }
.navy { fill: #12239e; background: #12239e; }

/* Title bar */
.titlebar {
  height: 43px;
  background: #3b3a37;
  color: #fff;
  display: grid;
  grid-template-columns: 37px 37px 37px auto 32px 1fr 500px 1fr auto 165px;
  align-items: center;
  padding-left: 12px;
}
.tb-btn { display: grid; place-items: center; height: 36px; }
.doc-name { padding-left: 3px; padding-top: 5px; white-space: nowrap; }
.caret { margin-left: 15px; }
.top-search {
  grid-column: 7;
  margin: 0 -13px 0 13px;
  height: 30px; background: #d4d4d2; border-radius: 2px;
  display: flex; align-items: center; gap: 12px; padding-left: 21px;
}
.top-search input { border: 0; background: none; font-size: 16px; flex: 1; outline: 0; }
.top-search input::placeholder { color: #1f5b4f; opacity: 1; }
.account { grid-column: 9; display: flex; align-items: center; gap: 11px; padding-right: 19px; }
.win-btns { grid-column: 10; display: grid; grid-template-columns: repeat(3, 55px); height: 100%; }
.win-btns button { display: grid; place-items: center; }

/* Menu */
.menu { height: 45px; background: #fafafa; display: flex; gap: 41px; padding: 5px 7px 0 28px; font-size: 16px; align-items: flex-start; }
.menu a { height: 33px; line-height: 30px; border-bottom: 3px solid transparent; }
.menu .file { margin-right: 6px; }
.menu .on { font-weight: 600; border-color: #117865; }
.share {
  margin-left: auto; height: 30px; width: 105px; background: #117865; color: #fff; border-radius: 4px;
  display: flex; align-items: center; justify-content: center; gap: 9px; font-size: 14px;
}

/* Ribbon */
.ribbon { background: #fafafa; height: 112px; display: flex; position: relative; z-index: 2; box-shadow: 0 1px 5px rgba(0,0,0,.25); }
.group { border-right: 1px solid #d2d0ce; height: 111px; display: flex; flex-direction: column; justify-content: space-between; }
.group h2 { font-size: 12px; font-weight: 400; text-align: center; line-height: 16px; }
.tools { display: grid; justify-content: center; align-items: start; padding-top: 6px; }
.tool { display: flex; flex-direction: column; align-items: center; gap: 5px; line-height: 20px; white-space: nowrap; }
.tool span { text-align: center; margin: 0 -10px; }
.ch { width: 8px; height: 6px; display: inline-block; margin-left: 3px; vertical-align: 1px; }
.off { color: #c8c6c4; }
.g-clip { width: 201px; }
.g-clip .tools { grid-template-columns: 50px 133px; justify-content: start; padding: 0 0 0 10px; }
.g-clip .tool { padding-top: 6px; }
.mini { display: flex; flex-direction: column; padding-left: 5px; color: #c8c6c4; }
.mini button { height: 30px; display: flex; align-items: center; gap: 4px; white-space: nowrap; }
.g-data { width: 459px; }
.g-data .tools { grid-template-columns: 60px 60px 90px 38px 62px 58px 82px; }
.g-quer { width: 145px; }
.g-quer .tools { grid-template-columns: 66px 58px; padding-left: 3px; }
.g-ins { width: 184px; }
.g-ins .tools { grid-template-columns: 52px 48px 64px; }
.g-calc { width: 218px; }
.g-calc .tools { grid-template-columns: 77px 60px 62px; }
.g-sens { width: 92px; }
.g-share { width: 73px; }
.g-cop { width: 74px; }
.collapse { margin-left: auto; align-self: flex-end; padding: 0 6px 8px; }
.fx { font: italic 24px "Liberation Serif", serif; fill: #aaa; }

/* Work area */
.work { flex: 1; display: flex; min-height: 790px; border-bottom: 1px solid #e1dfdd; }
.rail { width: 51px; background: #f3f2f1; border-right: 1px solid #e1dfdd; display: flex; flex-direction: column; }
.rail button { height: 50px; display: grid; place-items: center; border-left: 3px solid transparent; padding: 0 3px 2px 0; }
.rail .on { border-color: #117865; }
.dax { font: 600 9px "Noto Sans", sans-serif; fill: #605e5c; stroke: none; }
.center { flex: 1; min-width: 0; display: flex; flex-direction: column; }
.stage { flex: 1; display: flex; }
.canvas { flex: 1; display: flex; padding: 0 124px 8px 124px; border-right: 1px solid #a8a8a8; }
.frame { flex: 1; display: flex; border: 2px dotted #555; border-top: 0; padding: 5px 5px 6px 14px; }
.report {
  flex: 1;
  display: grid;
  grid-template-columns: 642fr 307fr 284fr;
  grid-template-rows: 60px minmax(0, 1fr) minmax(0, 1fr);
  column-gap: 14px;
  row-gap: 13px;
  padding: 13px 17px 12px 10px;
  background:
    radial-gradient(ellipse 36% 58% at 100% 104%, #182a2e 0%, rgba(24,44,50,.8) 40%, rgba(24,44,50,0) 100%),
    radial-gradient(ellipse 82% 96% at 22% 80%, #1fc2b0 0%, #1bb5a0 30%, rgba(20,150,142,.95) 44%, rgba(18,110,118,.7) 60%, rgba(14,66,90,.25) 84%, rgba(14,50,90,0) 100%),
    radial-gradient(ellipse 36% 75% at 100% 20%, #113a74 0%, rgba(16,58,116,0) 100%),
    linear-gradient(100deg, #0f9080 0%, #0d5f60 16%, #0d3a50 34%, #0c2b50 50%, #0d3262 100%);
}
.head { grid-column: 1 / -1; display: flex; justify-content: space-between; align-items: center; }
.head h1 {
  font: bold 33px/48px "Liberation Serif", serif; color: #dab30a; height: 60px; width: 433px; padding-left: 6px; white-space: nowrap;
  background: rgba(130,150,170,.15); box-shadow: 8px 8px 12px rgba(20,40,40,.45);
}
.arrows { display: flex; gap: 19px; align-items: center; padding-right: 7px; }
.card {
  margin: 0; border: 0; padding: 0; min-width: 0;
  background: rgba(130,150,170,.12); box-shadow: 6px 6px 12px rgba(20,40,40,.5);
}
section.card { margin-right: 7px; display: flex; flex-direction: column; }
.card h3, .slicer legend { font: bold 17px/23px Roboto, sans-serif; text-align: center; color: #f0e199; }
.card .it { font-style: italic; color: #fff; }
.legend { list-style: none; display: flex; justify-content: center; gap: 5px; font-size: 13px; font-weight: 700; line-height: 18px; color: #f0e199; padding-top: 9px; }
.legend li { display: flex; align-items: center; gap: 2px; }
.legend i { width: 10px; height: 10px; border-radius: 50%; }
.chart { width: 100%; height: 0; flex: 1 1 0; margin-top: 4px; min-height: 0; font-size: 12px; font-weight: 600; }
.avg { fill: #fff; text-anchor: end; font-weight: 400; }
.ytick { text-anchor: end; }
.xtick { text-anchor: middle; }
.axis { font: bold 14px Roboto, sans-serif; fill: #252423; text-anchor: middle; }

.slicer { display: flex; flex-direction: column; font-size: 16px; font-style: italic; font-weight: 700; color: #fff; }
.slicer legend { float: left; width: 100%; font-style: normal; padding: 0; }
.slicer label { display: flex; align-items: center; gap: 8px; padding-left: 13px; }
.slicer input { appearance: none; width: 17px; height: 17px; border: 1px solid #85807a; }
.country label { height: 54px; }
.country legend { margin-bottom: 2px; }
.product label { height: 46px; }
.product legend { margin-bottom: 2px; }
.slicer.band { margin-top: 2px; }
.band label { height: 62px; }
.band legend { margin-bottom: 2px; }
.time label { height: 94px; }
.time legend { margin-bottom: 7px; }

/* Side panes */
.filters { width: 40px; display: flex; flex-direction: column; align-items: center; padding-top: 16px; gap: 20px; }
.filters h2, .viz h2 { writing-mode: vertical-rl; font-size: 17px; line-height: 22px; }
.filters h2 { margin-top: -10px; }
.viz { width: 43px; background: #f3f2f1; border-left: 1px solid #e1dfdd; border-right: 1px solid #e1dfdd; display: flex; flex-direction: column; align-items: center; padding-top: 17px; gap: 18px; }
.viz h2 { font-size: 18px; margin-right: 3px; }
.data { width: 226px; background: #f3f2f1; padding: 0 5px 0 6px; }
.data-head { display: flex; justify-content: space-between; align-items: center; padding: 12px 5px 0 5px; }
.data-head h2 { font-size: 18px; line-height: 26px; }
.flip { transform: scaleX(-1); }
.data-search { margin-top: 19px; height: 30px; background: #fff; border: 1px solid #d1d1d1; border-bottom-color: #605e5c; border-radius: 4px; display: flex; align-items: center; gap: 7px; padding-left: 15px; }
.data-search input { border: 0; outline: 0; width: 150px; font-size: 16px; }
.data-search input::placeholder { color: #707070; opacity: 1; }
.tree { position: relative; padding-top: 1px; color: #3b3a39; }
.tree label, .table-row { height: 30px; display: flex; align-items: center; }
.tree label { padding-left: 50px; white-space: nowrap; }
.tree label svg { width: 16px; height: 18px; margin: 0 7px 0 10px; }
.tree label.exp { padding-left: 34px; }
.tree label .arrow { width: 8px; height: 14px; margin: 0 8px 0 0; }
.table-row { padding-left: 12px; gap: 5px; }
.table-row svg:nth-child(2) { margin-right: 2px; }
.tree input { appearance: none; width: 15px; height: 15px; border: 1px solid #777; border-radius: 2px; }
.scrollbar { position: absolute; right: 0; top: 20px; bottom: -2px; width: 10px; background: #c8c6c4; }

/* Page tabs */
.pages { height: 44px; background: #f3f2f1; display: flex; }
.modes { width: 160px; border-right: 1px solid #a19f9d; display: flex; align-items: center; padding: 0 8px 0 13px; }
.modes button { height: 36px; width: 30px; display: grid; place-items: center; margin-right: 28px; border-bottom: 3px solid transparent; }
.modes button + button { margin-right: 22px; }
.modes .on { border-color: #117865; }
.modes svg + svg { margin-left: 22px; }
.pages a { background: #fff; border-right: 1px solid #c8c6c4; padding: 0 25px; line-height: 45px; white-space: nowrap; position: relative; }
.pages .on { font-weight: 500; border-bottom: 5px solid #117865; }
.pages .on b { position: absolute; right: 5px; top: 3px; font-size: 13px; line-height: 18px; font-weight: 500; }
.add { width: 50px; background: #117865; display: grid; place-items: center; }

/* Status bar */
.status { height: 30px; background: #f3f2f1; border-bottom: 1px solid #000; display: flex; justify-content: space-between; align-items: center; padding: 0 22px 0 5px; color: #484644; }
.zoom { display: flex; align-items: center; }
.zoom input { appearance: none; width: 125px; height: 14px; margin: 0 7px; background: linear-gradient(#605e5c, #605e5c) center / 100% 1px no-repeat, linear-gradient(#605e5c, #605e5c) 50% 50% / 1px 8px no-repeat; }
.zoom input::-webkit-slider-thumb { appearance: none; width: 5px; height: 13px; background: #605e5c; }
.pct { margin: 0 24px 0 16px; color: #605e5c; }

/* Windows taskbar */
.taskbar { height: 60px; background: #e2e5e8; display: grid; grid-template-columns: 1fr auto 1fr; align-items: center; }
.widgets { justify-self: start; margin-left: 26px; }
.dock { display: flex; align-items: center; height: 60px; }
.dock button { width: 55px; height: 48px; display: grid; place-items: center; position: relative; }
.dock > button:first-child { width: 46px; margin: 0 10px 0 4px; }
.task-search { width: 272px; height: 40px; margin-right: 5px; background: #f7f9f9; border: 1px solid #d0d3d5; border-radius: 20px; display: flex; align-items: center; gap: 10px; padding: 0 2px 0 12px; }
.task-search input { flex: 1; min-width: 0; border: 0; background: none; font-size: 16px; outline: 0; }
.task-search input::placeholder { color: #5a5a5a; opacity: 1; }
.run::after { content: ""; position: absolute; left: 24px; bottom: -1px; width: 8px; height: 4px; border-radius: 2px; background: #85888a; }
.current { background: linear-gradient(#f3f5f7, #f3f5f7) center / 45px 48px no-repeat; }
.current::after { left: 18px; width: 20px; background: #0a78d4; }
.wa b { position: absolute; left: 28px; top: 2px; width: 20px; height: 20px; border-radius: 50%; background: #0a78d4; color: #fff; font-size: 13px; line-height: 20px; font-weight: 400; }
.tray { justify-self: end; display: flex; align-items: center; padding-right: 27px; line-height: 20px; color: #1b1b1b; }
.lang { text-align: center; width: 46px; margin: 0 14px; }
.tray > svg + svg { margin-left: 22px; }
.net { display: flex; gap: 10px; }
time { font-size: 15px; text-align: right; margin: 0 11px 0 20px; }
```
